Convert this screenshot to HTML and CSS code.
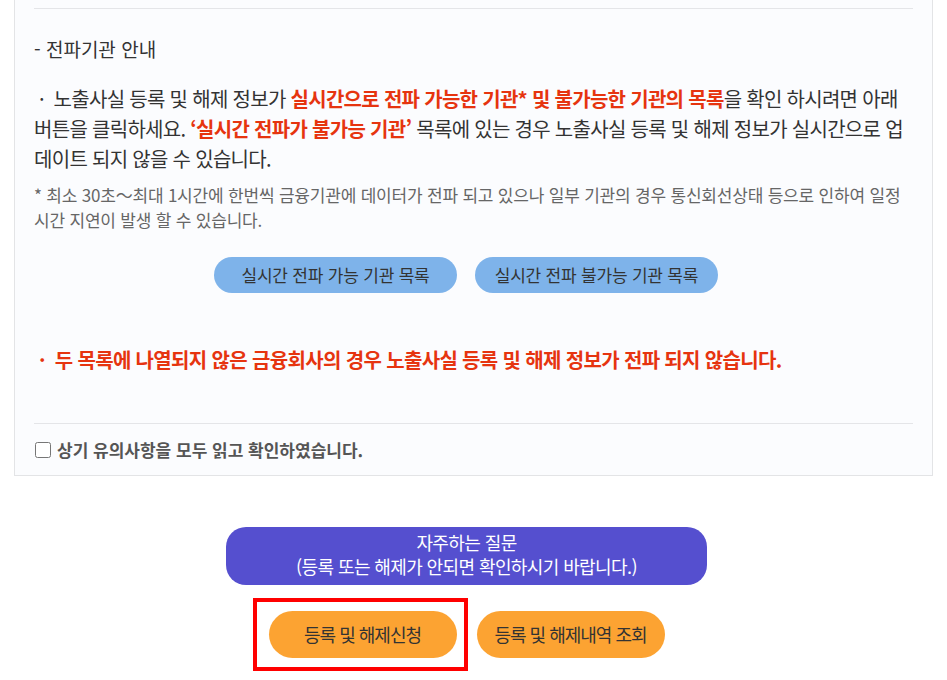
FILE: index.html
```html
<!DOCTYPE html>
<html lang="ko">
<head>
    <meta charset="UTF-8">
    <meta name="viewport" content="width=device-width, initial-scale=1.0">
    <title>노출사실 등록 및 해제</title>
    <link rel="stylesheet" href="styles.css">
</head>
<body>
    <div class="wrap">
        <div class="notice-box">
            <div class="notice-body">
                <p class="notice-title">- 전파기관 안내</p>
                <p class="notice-text">&nbsp;·&nbsp; 노출사실 등록 및 해제 정보가 <strong class="em-red">실시간으로 전파 가능한 기관* 및 불가능한 기관의 목록</strong>을 확인 하시려면 아래 버튼을 클릭하세요. <strong class="em-red">‘실시간 전파가 불가능 기관’</strong> 목록에 있는 경우 노출사실 등록 및 해제 정보가 실시간으로 업데이트 되지 않을 수 있습니다.</p>
                <p class="notice-sub">* 최소 30초～최대 1시간에 한번씩 금융기관에 데이터가 전파 되고 있으나 일부 기관의 경우 통신회선상태 등으로 인하여 일정 시간 지연이 발생 할 수 있습니다.</p>
                <div class="org-links">
                    <a href="#" class="btn-org">실시간 전파 가능 기관 목록</a>
                    <a href="#" class="btn-org">실시간 전파 불가능 기관 목록</a>
                </div>
                <p class="notice-warn">&nbsp;·&nbsp; 두 목록에 나열되지 않은 금융회사의 경우 노출사실 등록 및 해제 정보가 전파 되지 않습니다.</p>
            </div>
            <label class="agree">
                <input type="checkbox" id="agreeCheck">
                <span>상기 유의사항을 모두 읽고 확인하였습니다.</span>
            </label>
        </div>

        <div class="actions">
            <a href="#" class="btn-faq">자주하는 질문<br>(등록 또는 해제가 안되면 확인하시기 바랍니다.)</a>
            <div class="action-row">
                <div class="marked"><a href="#" class="btn-apply">등록 및 해제신청</a></div>
                <a href="#" class="btn-apply">등록 및 해제내역 조회</a>
            </div>
        </div>
    </div>
</body>
</html>
```

FILE: styles.css
```css
body {
    margin: 0;
    background-color: #fff;
    font-family: "Noto Sans CJK KR", "Noto Sans", sans-serif;
    color: #333;
}
a {
    text-decoration: none;
}
.wrap {
    padding: 0 14px 40px;
}
.notice-box {
    margin-top: -33px;
    padding: 40px 19px 0;
    background-color: #fbfcfe;
    border: 1px solid #e3e4e6;
}
.notice-body {
    padding: 27px 0 48px;
    border-top: 1px solid #e4e5e8;
    border-bottom: 1px solid #e4e5e8;
}
.notice-body p {
    margin: 0;
}
.notice-title {
    font-size: 19px;
    line-height: 26px;
}
.notice-text {
    margin-top: 22px !important;
    font-size: 20px;
    line-height: 30px;
    letter-spacing: -0.7px;
}
.em-red {
    color: #e6340f;
}
.notice-sub {
    margin-top: 8px !important;
    font-size: 17px;
    line-height: 25px;
    letter-spacing: -0.2px;
    color: #666;
}
.org-links {
    display: flex;
    justify-content: center;
    gap: 18px;
    margin-top: 25px;
    padding-right: 15px;
}
.btn-org {
    width: 243px;
    height: 36px;
    line-height: 36px;
    text-align: center;
    background-color: #7eb3ea;
    border-radius: 18px;
    font-size: 17px;
    letter-spacing: -0.2px;
    color: #333;
}
.notice-warn {
    margin-top: 52px !important;
    font-size: 20px;
    line-height: 30px;
    font-weight: bold;
    letter-spacing: -0.65px;
    color: #e6340f;
}
.agree {
    display: flex;
    align-items: center;
    gap: 6px;
    height: 51px;
    font-size: 17px;
    font-weight: bold;
    color: #555;
}
.agree input {
    width: 16px;
    height: 16px;
    margin: 0 0 0 1px;
}
.actions {
    display: flex;
    flex-direction: column;
    align-items: center;
    padding-right: 14px;
}
.btn-faq {
    width: 481px;
    height: 58px;
    margin-top: 51px;
    padding-top: 3px;
    box-sizing: border-box;
    background-color: #554fcf;
    border-radius: 20px;
    text-align: center;
    font-size: 18px;
    line-height: 24px;
    letter-spacing: -0.6px;
    color: #fff;
}
.action-row {
    display: flex;
    gap: 20px;
    margin-top: 26px;
}
.btn-apply {
    display: block;
    width: 188px;
    height: 47px;
    line-height: 47px;
    text-align: center;
    background-color: #fca332;
    border-radius: 24px;
    font-size: 18px;
    letter-spacing: -1px;
    color: #333;
}
/* red frame drawn around the first action button */
.marked {
    position: relative;
}
.marked::after {
    content: "";
    position: absolute;
    top: -13px;
    left: -16px;
    right: -11px;
    bottom: -13px;
    border: 4px solid #ff0000;
}
```
